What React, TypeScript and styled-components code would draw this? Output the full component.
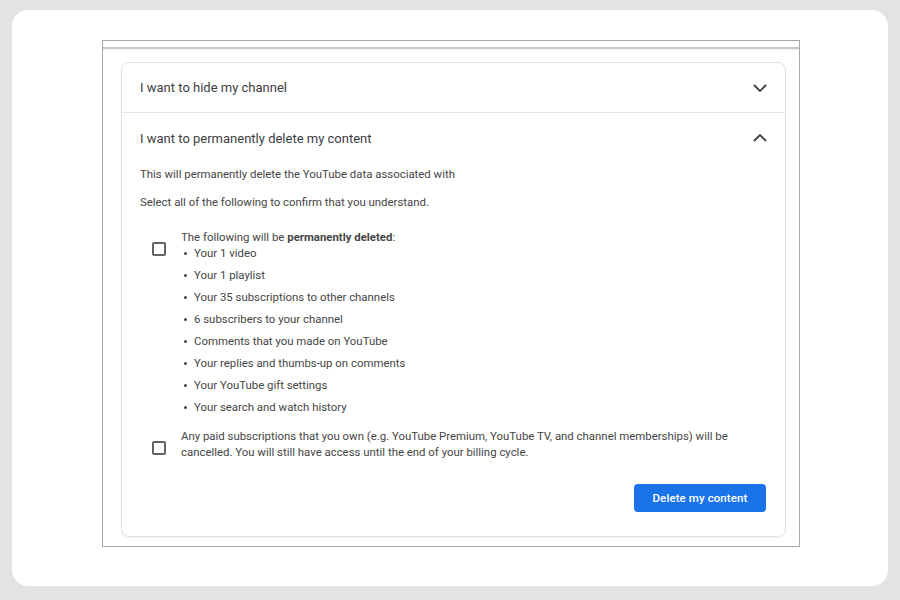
import React from 'react';
import styled, { createGlobalStyle } from 'styled-components';

const GlobalStyle = createGlobalStyle`
  html, body {
    margin: 0;
    padding: 0;
    background: #e1e4e2;
  }
  * {
    box-sizing: border-box;
  }
`;

const Page = styled.div`
  width: 900px;
  height: 600px;
  padding: 10px 12px 14px 12px;
`;

const Sheet = styled.div`
  width: 876px;
  height: 576px;
  background: #ffffff;
  border-radius: 16px;
  padding: 30px 0 0 90px;
`;

const Frame = styled.div`
  width: 698px;
  height: 507px;
  border: 1px solid #a8a8a8;
  background: #ffffff;
  padding: 6px 0 0 0;
`;

const TopRule = styled.div`
  height: 2px;
  background: #c9c9c9;
  box-shadow: 0 1px 2px rgba(0, 0, 0, 0.08);
  margin-bottom: 13px;
`;

const Panel = styled.div`
  margin: 0 13px 0 18px;
  border: 1px solid #e2e2e2;
  border-radius: 8px;
  box-shadow: 0 1px 2px rgba(0, 0, 0, 0.05);
  font-family: Roboto, 'Liberation Sans', sans-serif;
  color: #3c4043;
`;

const Header = styled.div<{ $divided?: boolean }>`
  height: 50px;
  display: flex;
  align-items: center;
  justify-content: space-between;
  padding: 0 18px 0 18px;
  font-size: 13px;
  border-bottom: ${(p) => (p.$divided ? '1px solid #e6e6e6' : 'none')};
`;

const Body = styled.div`
  padding: 3px 19px 24px 18px;
  font-size: 11.4px;
  line-height: 16px;
  color: #454545;
`;

const Para = styled.p<{ $top?: number }>`
  margin: ${(p) => p.$top ?? 0}px 0 0 0;
`;

const CheckRow = styled.div<{ $top: number }>`
  display: flex;
  align-items: flex-start;
  margin-top: ${(p) => p.$top}px;
`;

const Box = styled.div`
  flex: none;
  width: 14px;
  height: 14px;
  margin: 13px 15px 0 12px;
  border: 2px solid #5f6368;
  border-radius: 2px;
`;

const CheckText = styled.div`
  flex: 1;
  padding-right: 30px;
`;

const List = styled.ul`
  margin: 0;
  padding: 0 0 0 13px;
  list-style: none;
`;

const Item = styled.li`
  position: relative;
  margin-top: 6px;
  &:first-child {
    margin-top: 0;
  }
  &::before {
    content: '';
    position: absolute;
    left: -10px;
    top: 7px;
    width: 3px;
    height: 3px;
    border-radius: 50%;
    background: #444;
  }
`;

const Actions = styled.div`
  display: flex;
  justify-content: flex-end;
  margin-top: 24px;
`;

const Button = styled.button`
  width: 132px;
  height: 28px;
  border: none;
  border-radius: 4px;
  background: #1a73e8;
  color: #ffffff;
  font-family: Roboto, 'Liberation Sans', sans-serif;
  font-weight: 500;
  font-size: 11.5px;
  letter-spacing: 0.1px;
`;

const Chevron = ({ up }: { up?: boolean }) => (
  <svg width="14" height="8" viewBox="0 0 14 8">
    <polyline
      points={up ? '1,7 7,1 13,7' : '1,1 7,7 13,1'}
      fill="none"
      stroke="#3c4043"
      strokeWidth="1.8"
    />
  </svg>
);

const items = [
  'Your 1 video',
  'Your 1 playlist',
  'Your 35 subscriptions to other channels',
  '6 subscribers to your channel',
  'Comments that you made on YouTube',
  'Your replies and thumbs-up on comments',
  'Your YouTube gift settings',
  'Your search and watch history',
];

const App = () => {
  return (
    <Page>
      <GlobalStyle />
      <Sheet>
        <Frame>
          <TopRule />
          <Panel>
            <Header $divided>
              <span>I want to hide my channel</span>
              <Chevron />
            </Header>
            <Header>
              <span>I want to permanently delete my content</span>
              <Chevron up />
            </Header>
            <Body>
              <Para>This will permanently delete the YouTube data associated with</Para>
              <Para $top={12}>Select all of the following to confirm that you understand.</Para>
              <CheckRow $top={19}>
                <Box />
                <CheckText>
                  The following will be <b>permanently deleted</b>:
                  <List>
                    {items.map((t) => (
                      <Item key={t}>{t}</Item>
                    ))}
                  </List>
                </CheckText>
              </CheckRow>
              <CheckRow $top={13}>
                <Box />
                <CheckText>
                  Any paid subscriptions that you own (e.g. YouTube Premium, YouTube TV, and channel
                  memberships) will be cancelled. You will still have access until the end of your
                  billing cycle.
                </CheckText>
              </CheckRow>
              <Actions>
                <Button>Delete my content</Button>
              </Actions>
            </Body>
          </Panel>
        </Frame>
      </Sheet>
    </Page>
  );
};

export default App;
